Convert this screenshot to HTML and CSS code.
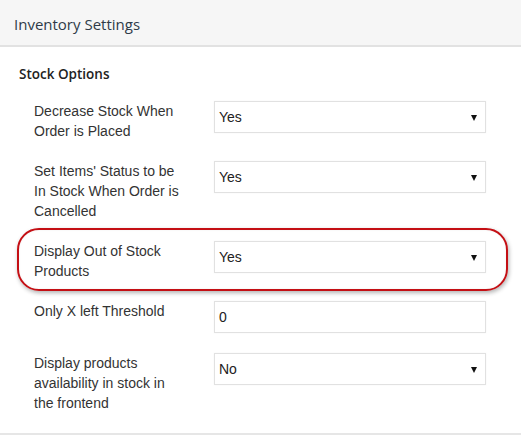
FILE: index.html
```html
<!DOCTYPE html>
<html>
<head>
<meta charset="utf-8">
<link rel="stylesheet" href="styles.css">
</head>
<body>
<div class="panel">
  <div class="panel-head">Inventory Settings</div>
  <div class="panel-body">
    <div class="section-title">Stock Options</div>
    <div class="form">
      <div class="row">
        <div class="label">Decrease Stock When Order is Placed</div>
        <div class="control"><div class="select"><span>Yes</span><span class="arrow"></span></div></div>
      </div>
      <div class="row">
        <div class="label">Set Items' Status to be In Stock When Order is Cancelled</div>
        <div class="control"><div class="select"><span>Yes</span><span class="arrow"></span></div></div>
      </div>
      <div class="row highlighted">
        <div class="label">Display Out of Stock Products</div>
        <div class="control"><div class="select"><span>Yes</span><span class="arrow"></span></div></div>
        <div class="ring"></div>
      </div>
      <div class="row">
        <div class="label">Only X left Threshold</div>
        <div class="control"><div class="input">0</div></div>
      </div>
      <div class="row">
        <div class="label">Display products availability in stock in the frontend</div>
        <div class="control"><div class="select"><span>No</span><span class="arrow"></span></div></div>
      </div>
    </div>
  </div>
</div>
</body>
</html>
```
FILE: styles.css
```css
html, body {
  margin: 0;
  padding: 0;
  background: #ffffff;
}
.panel {
  width: 521px;
  border-bottom: 2px solid #e6e6e6;
}
.panel-head {
  height: 45px;
  background: #f6f6f6;
  border-bottom: 2px solid #e2e2e2;
  font-family: "Open Sans", sans-serif;
  font-size: 15px;
  color: #2f3b48;
  padding-left: 14px;
  line-height: 48px;
  box-sizing: content-box;
}
.panel-body {
  padding: 18px 0 20px 19px;
}
.section-title {
  font-family: "Open Sans", sans-serif;
  font-weight: 600;
  font-size: 13.5px;
  color: #222;
  line-height: 18px;
  margin-bottom: 18px;
}
.form {
  display: flex;
  flex-direction: column;
  gap: 20px;
}
.row {
  display: flex;
  align-items: flex-start;
  position: relative;
}
.label {
  width: 150px;
  padding: 0 15px;
  font-family: "Liberation Sans", Arial, sans-serif;
  font-size: 14px;
  line-height: 20px;
  color: #333;
}
.control {
  padding: 0 15px;
}
.select, .input {
  width: 258px;
  height: 30px;
  border: 1px solid #e1e1e1;
  box-shadow: 0 0 2px rgba(0,0,0,0.04);
  display: flex;
  align-items: center;
  justify-content: space-between;
  padding: 0 8px 0 4px;
  box-sizing: content-box;
  font-family: "Liberation Sans", Arial, sans-serif;
  font-size: 14px;
  color: #222;
}
.arrow {
  width: 0;
  height: 0;
  border-left: 3.5px solid transparent;
  border-right: 3.5px solid transparent;
  border-top: 6px solid #111;
  margin-top: 1px;
}
.ring {
  position: absolute;
  left: -2px;
  top: -13px;
  width: 487px;
  height: 59px;
  border: 2px solid #c40f14;
  border-radius: 22px;
  box-shadow: 1px 2px 4px rgba(0,0,0,0.3), inset 0 0 2px rgba(0,0,0,0.08);
  pointer-events: none;
}
```
